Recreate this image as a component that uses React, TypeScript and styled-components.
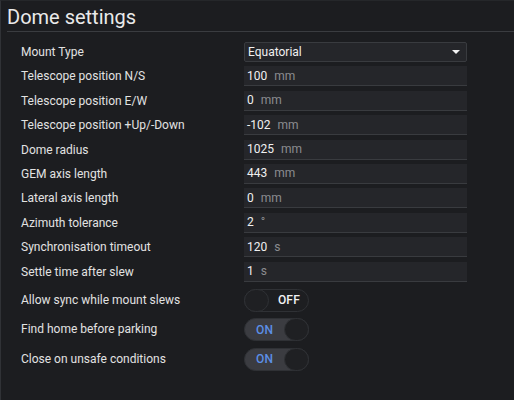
import React, { useState } from "react";
import styled, { createGlobalStyle } from "styled-components";

const GlobalStyle = createGlobalStyle`
  html, body {
    margin: 0;
    padding: 0;
    background: #1c1d20;
  }
  body {
    font-family: Roboto, "Noto Sans", sans-serif;
  }
`;

const Panel = styled.div`
  width: 514px;
  height: 400px;
  box-sizing: border-box;
  background: #1c1d20;
  border-left: 1px solid #303236;
  border-top: 1px solid #25272a;
  color: #e4e4e4;
  overflow: hidden;
`;

const Title = styled.h2`
  margin: 0 0 0 6px;
  padding: 6px 0 3px 0;
  font-size: 20px;
  font-weight: 400;
  line-height: 21px;
  color: #eaeaea;
  border-bottom: 1px solid #3a3c40;
`;

const Form = styled.div`
  display: grid;
  grid-template-columns: 223px 223px;
  padding: 10px 0 0 20px;
  align-items: center;
`;

const Label = styled.div<{ $toggle?: boolean; $first?: boolean }>`
  font-size: 12px;
  color: #e2e2e2;
  height: ${(p) => (p.$toggle ? "23px" : "20px")};
  line-height: ${(p) => (p.$toggle ? "23px" : "20px")};
  margin-bottom: ${(p) => (p.$toggle ? "6.5px" : "4.4px")};
  margin-top: ${(p) => (p.$first ? "3px" : "0")};
  white-space: nowrap;
`;

const Select = styled.div`
  height: 20px;
  box-sizing: border-box;
  background: #25262a;
  border: 1px solid #393b3f;
  border-radius: 2px;
  display: flex;
  align-items: center;
  justify-content: space-between;
  padding: 0 6px 0 3px;
  font-size: 12px;
  color: #f0f0f0;
  margin-bottom: 4.4px;
`;

const Caret = styled.span`
  width: 0;
  height: 0;
  border-left: 4px solid transparent;
  border-right: 4px solid transparent;
  border-top: 4px solid #f2f2f2;
`;

const Field = styled.div`
  height: 20px;
  box-sizing: border-box;
  background: #25262a;
  border-bottom: 1px solid #393b3f;
  display: flex;
  align-items: center;
  padding-left: 3px;
  font-size: 12px;
  margin-bottom: 4.4px;
`;

const Value = styled.span`
  color: #f0f0f0;
`;

const Unit = styled.span`
  color: #8b8c90;
  margin-left: 7px;
`;

const ToggleCell = styled.div<{ $first?: boolean }>`
  margin-bottom: 6.5px;
  margin-top: ${(p) => (p.$first ? "3px" : "0")};
  height: 23px;
`;

const Toggle = styled.button<{ $on: boolean }>`
  position: relative;
  width: 65px;
  height: 23px;
  box-sizing: border-box;
  border-radius: 12px;
  border: 1px solid #2f3135;
  background: ${(p) => (p.$on ? "#3b3c41" : "#1d1e21")};
  padding: 0;
  cursor: pointer;
  display: flex;
  align-items: center;
  justify-content: ${(p) => (p.$on ? "flex-start" : "flex-end")};
  font-family: Roboto, "Noto Sans", sans-serif;
  font-size: 12px;
  font-weight: 500;
  color: ${(p) => (p.$on ? "#5c8fe6" : "#f2f2f2")};
`;

const ToggleText = styled.span<{ $on: boolean }>`
  padding: ${(p) => (p.$on ? "0 0 0 11px" : "0 8px 0 0")};
  letter-spacing: 0.2px;
`;

const Knob = styled.span<{ $on: boolean }>`
  position: absolute;
  top: -1px;
  ${(p) => (p.$on ? "right: -1px;" : "left: -1px;")}
  width: 25px;
  height: 23px;
  box-sizing: border-box;
  border-radius: 12px;
  background: #1f2023;
  border: 1px solid #2f3135;
`;

const numeric = [
  { label: "Telescope position N/S", value: "100", unit: "mm" },
  { label: "Telescope position E/W", value: "0", unit: "mm" },
  { label: "Telescope position +Up/-Down", value: "-102", unit: "mm" },
  { label: "Dome radius", value: "1025", unit: "mm" },
  { label: "GEM axis length", value: "443", unit: "mm" },
  { label: "Lateral axis length", value: "0", unit: "mm" },
  { label: "Azimuth tolerance", value: "2", unit: "°" },
  { label: "Synchronisation timeout", value: "120", unit: "s" },
  { label: "Settle time after slew", value: "1", unit: "s" },
];

const switchesInit = [
  { label: "Allow sync while mount slews", on: false },
  { label: "Find home before parking", on: true },
  { label: "Close on unsafe conditions", on: true },
];

const App = () => {
  const [switches, setSwitches] = useState(switchesInit);

  const flip = (i: number) => {
    setSwitches((s) => s.map((x, j) => (j === i ? { ...x, on: !x.on } : x)));
  };

  return (
    <>
      <GlobalStyle />
      <Panel>
        <Title>Dome settings</Title>
        <Form>
          <Label>Mount Type</Label>
          <Select>
            Equatorial
            <Caret />
          </Select>
          {numeric.map((row) => (
            <React.Fragment key={row.label}>
              <Label>{row.label}</Label>
              <Field>
                <Value>{row.value}</Value>
                <Unit>{row.unit}</Unit>
              </Field>
            </React.Fragment>
          ))}
          {switches.map((sw, i) => (
            <React.Fragment key={sw.label}>
              <Label $toggle $first={i === 0}>
                {sw.label}
              </Label>
              <ToggleCell $first={i === 0}>
                <Toggle $on={sw.on} onClick={() => flip(i)}>
                  <ToggleText $on={sw.on}>{sw.on ? "ON" : "OFF"}</ToggleText>
                  <Knob $on={sw.on} />
                </Toggle>
              </ToggleCell>
            </React.Fragment>
          ))}
        </Form>
      </Panel>
    </>
  );
};

export default App;
